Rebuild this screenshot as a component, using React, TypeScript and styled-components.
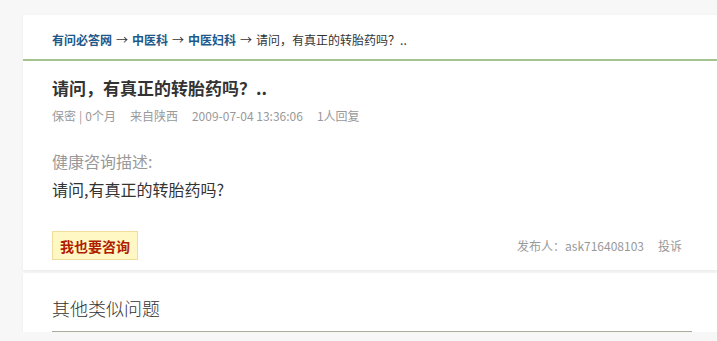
import React from "react";
import styled, { createGlobalStyle } from "styled-components";

const GlobalStyle = createGlobalStyle`
  html, body {
    margin: 0;
    padding: 0;
    background: #f7f7f7;
    overflow: hidden;
  }
  body {
    font-family: "Microsoft YaHei", "Noto Sans CJK SC", "Liberation Sans", sans-serif;
  }
`;

const Page = styled.div`
  padding: 15px 0 0 23px;
  display: flex;
  flex-direction: column;
  gap: 3px;
`;

const Card = styled.div`
  background: #fff;
  box-shadow: 0 1px 3px rgba(0, 0, 0, 0.06);
`;

const Breadcrumb = styled.div`
  padding: 17px 0 11px 29px;
  line-height: 16px;
  font-size: 12px;
  color: #333;
  border-bottom: 2px solid #a3c38f;
`;

const Crumb = styled.a`
  color: #20588a;
  font-weight: bold;
  text-decoration: none;
`;

const Arrow = styled.span`
  margin: 0 4px;
  color: #333;
`;

const Body = styled.div`
  padding: 13px 35px 10px 29px;
`;

const Title = styled.h1`
  margin: 0;
  font-size: 17px;
  line-height: 28px;
  font-weight: bold;
  color: #333;
`;

const Meta = styled.div`
  margin-top: 4px;
  font-size: 12px;
  line-height: 20px;
  color: #999;
  display: flex;
  gap: 14px;
`;

const Sep = styled.span`
  margin: 0 3px;
`;

const Label = styled.div`
  margin-top: 23px;
  font-size: 16px;
  line-height: 24px;
  color: #999;
`;

const Desc = styled.div`
  margin-top: 4px;
  font-size: 16px;
  line-height: 24px;
  color: #333;
`;

const Footer = styled.div`
  margin-top: 30px;
  display: flex;
  justify-content: space-between;
  align-items: center;
`;

const AskButton = styled.button`
  height: 29px;
  padding: 0 7px;
  box-sizing: border-box;
  background: #fff8c5;
  border: 1px solid #f0dd9c;
  color: #b01e00;
  font-family: inherit;
  font-size: 14px;
  font-weight: bold;
  cursor: pointer;
`;

const Publisher = styled.div`
  font-size: 12px;
  color: #999;
  display: flex;
  gap: 14px;
`;

const SectionHead = styled.div`
  margin: 0 25px 0 29px;
  padding: 22px 0 10px;
  font-size: 18px;
  line-height: 26px;
  font-weight: 300;
  color: #333;
  border-bottom: 1px solid #a7ad9b;
`;

export default function App() {
  return (
    <>
      <GlobalStyle />
      <Page>
        <Card>
          <Breadcrumb>
            <Crumb href="#">有问必答网</Crumb>
            <Arrow>→</Arrow>
            <Crumb href="#">中医科</Crumb>
            <Arrow>→</Arrow>
            <Crumb href="#">中医妇科</Crumb>
            <Arrow>→</Arrow>
            请问，有真正的转胎药吗？..
          </Breadcrumb>
          <Body>
            <Title>请问，有真正的转胎药吗？..</Title>
            <Meta>
              <span>
                保密<Sep>|</Sep>0个月
              </span>
              <span>来自陕西</span>
              <span>2009-07-04 13:36:06</span>
              <span>1人回复</span>
            </Meta>
            <Label>健康咨询描述:</Label>
            <Desc>请问,有真正的转胎药吗?</Desc>
            <Footer>
              <AskButton>我也要咨询</AskButton>
              <Publisher>
                <span>发布人：ask716408103</span>
                <span>投诉</span>
              </Publisher>
            </Footer>
          </Body>
        </Card>
        <Card>
          <SectionHead>其他类似问题</SectionHead>
        </Card>
      </Page>
    </>
  );
}
